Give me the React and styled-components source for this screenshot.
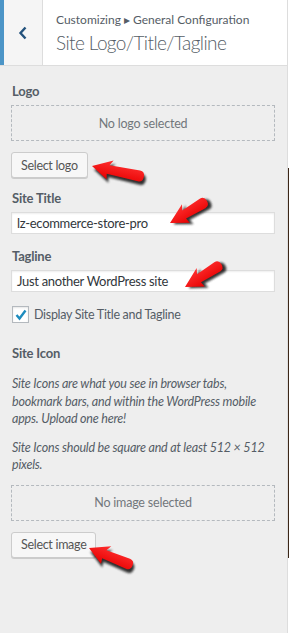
import React from "react";
import styled, { createGlobalStyle } from "styled-components";

const Global = createGlobalStyle`
  html, body { margin: 0; padding: 0; height: 100%; }
  body { background: #fff; font-family: Lato, "Open Sans", sans-serif; overflow: hidden; }
  #root { height: 100%; }
`;

const Page = styled.div`
  display: flex;
  height: 633px;
  width: 289px;
  position: relative;
`;

const Sidebar = styled.div`
  width: 287px;
  flex: 0 0 287px;
  background: #eee;
  border-right: 1px solid #ddd;
  display: flex;
  flex-direction: column;
`;

const Preview = styled.div`
  flex: 1;
  background: #fff;
  display: flex;
  flex-direction: column;
  padding-top: 168px;
`;

const PreviewStrip = styled.div`
  height: 390px;
  background: #3b2617;
`;

const Header = styled.div`
  display: flex;
  height: 65px;
  background: #fff;
  border-bottom: 1px solid #ddd;
`;

const BackButton = styled.div`
  width: 38px;
  flex: 0 0 38px;
  background: #f5f5f5;
  border-left: 4px solid #4c95c7;
  border-right: 1px solid #ddd;
  display: flex;
  align-items: center;
  justify-content: center;
`;

const HeaderText = styled.div`
  display: flex;
  flex-direction: column;
  padding: 11px 0 0 13px;
  color: #555d66;
`;

const Crumb = styled.div`
  font-size: 12px;
  line-height: 18px;
`;

const Title = styled.div`
  font-size: 19px;
  font-weight: 300;
  line-height: 28px;
  letter-spacing: -0.6px;
`;

const Content = styled.div`
  display: flex;
  flex-direction: column;
  padding: 15px 12px 0 11px;
`;

const Control = styled.div`
  display: flex;
  flex-direction: column;
  margin-bottom: ${(p) => p.$mb || 12}px;
`;

const Label = styled.div`
  font-size: 13px;
  font-weight: 700;
  color: #555d66;
  line-height: 20px;
  letter-spacing: -0.2px;
  margin-bottom: ${(p) => p.$mb || 4}px;
  padding-left: 1px;
`;

const Placeholder = styled.div`
  height: 34px;
  border: 1px dashed #b4b9be;
  display: flex;
  align-items: center;
  justify-content: center;
  font-size: 12.5px;
  letter-spacing: -0.2px;
  color: #72777c;
`;

const Button = styled.div`
  align-self: flex-start;
  margin-top: 11px;
  height: 24px;
  padding: 0 9px;
  display: flex;
  align-items: center;
  background: #f7f7f7;
  border: 1px solid #ccc;
  border-radius: 3px;
  box-shadow: 0 1px 0 #ccc;
  font-size: 12.5px;
  letter-spacing: -0.3px;
  color: #555;
`;

const Input = styled.div`
  height: 20px;
  background: #fff;
  border: 1px solid #ddd;
  box-shadow: inset 0 1px 2px rgba(0, 0, 0, 0.07);
  display: flex;
  align-items: center;
  padding: 0 5px;
  font-size: 13px;
  letter-spacing: -0.3px;
  color: #32373c;
`;

const CheckRow = styled.div`
  display: flex;
  align-items: center;
  gap: 5px;
  padding-left: 1px;
  margin-bottom: 20px;
`;

const Box = styled.div`
  width: 15px;
  height: 15px;
  border: 1px solid #b4b9be;
  background: #fff;
  box-shadow: inset 0 1px 2px rgba(0, 0, 0, 0.1);
  display: flex;
  align-items: center;
  justify-content: center;
`;

const CheckLabel = styled.span`
  font-size: 12.5px;
  letter-spacing: -0.3px;
  color: #555d66;
`;

const Desc = styled.p`
  margin: 0 0 11px;
  padding-left: 1px;
  max-width: 256px;
  font-size: 12.5px;
  font-style: italic;
  color: #555d66;
  line-height: 17.5px;
  letter-spacing: -0.2px;
`;

const ArrowWrap = styled.svg`
  position: absolute;
  overflow: visible;
  left: ${(p) => p.$x}px;
  top: ${(p) => p.$y}px;
  width: 1px;
  height: 1px;
  pointer-events: none;
`;

function Arrow({ x, y, angle, len }) {
  const L = len;
  const d = `M0 0 L20 -10 L17 -4.5 L${L - 4} -5.5 Q${L + 1} -5.5 ${L + 1} 0 Q${L + 1} 5.5 ${L - 4} 5.5 L16 4.5 L17 10 Z`;
  const id = `a${x}_${y}`;
  return (
    <ArrowWrap $x={x} $y={y}>
      <defs>
        <filter id={`sh${id}`} x="-50%" y="-50%" width="200%" height="200%">
          <feGaussianBlur stdDeviation="1.2" />
        </filter>
        <linearGradient id={`g${id}`} x1="0" y1="-10" x2="0" y2="10" gradientUnits="userSpaceOnUse">
          <stop offset="0" stopColor="#ff3030" />
          <stop offset="1" stopColor="#e60000" />
        </linearGradient>
      </defs>
      <g transform={`rotate(${angle})`}>
        <path d={d} fill="#000" opacity="0.8" transform="translate(2.5 3)" filter={`url(#sh${id})`} />
        <path d={d} fill={`url(#g${id})`} />
      </g>
    </ArrowWrap>
  );
}

function Chevron() {
  return (
    <svg width="10" height="14" viewBox="0 0 10 14">
      <path d="M7.5 1.5 L2.5 7 L7.5 12.5" fill="none" stroke="#23527c" strokeWidth="2.4" />
    </svg>
  );
}

function Check() {
  return (
    <svg width="14" height="14" viewBox="0 0 14 14">
      <path d="M2.5 7 L5.5 10.5 L11.5 2.5" fill="none" stroke="#1e8cbe" strokeWidth="2.4" />
    </svg>
  );
}

export default function App() {
  return (
    <>
      <Global />
      <Page>
        <Sidebar>
          <Header>
            <BackButton>
              <Chevron />
            </BackButton>
            <HeaderText>
              <Crumb>Customizing ▸ General Configuration</Crumb>
              <Title>Site Logo/Title/Tagline</Title>
            </HeaderText>
          </Header>
          <Content>
            <Control $mb={10}>
              <Label>Logo</Label>
              <Placeholder>No logo selected</Placeholder>
              <Button>Select logo</Button>
            </Control>
            <Control $mb={12}>
              <Label>Site Title</Label>
              <Input>lz-ecommerce-store-pro</Input>
            </Control>
            <Control $mb={14}>
              <Label>Tagline</Label>
              <Input>Just another WordPress site</Input>
            </Control>
            <CheckRow>
              <Box>
                <Check />
              </Box>
              <CheckLabel>Display Site Title and Tagline</CheckLabel>
            </CheckRow>
            <Control>
              <Label $mb={12}>Site Icon</Label>
              <Desc>
                Site Icons are what you see in browser tabs, bookmark bars, and within the WordPress mobile apps. Upload one here!
              </Desc>
              <Desc>Site Icons should be square and at least 512 × 512 pixels.</Desc>
              <Placeholder>No image selected</Placeholder>
              <Button>Select image</Button>
            </Control>
          </Content>
        </Sidebar>
        <Preview>
          <PreviewStrip />
        </Preview>
        <Arrow x={92} y={166} angle={12} len={52} />
        <Arrow x={170} y={223} angle={-31} len={42} />
        <Arrow x={185} y={287} angle={-32} len={42} />
        <Arrow x={89} y={548} angle={22} len={46} />
      </Page>
    </>
  );
}
